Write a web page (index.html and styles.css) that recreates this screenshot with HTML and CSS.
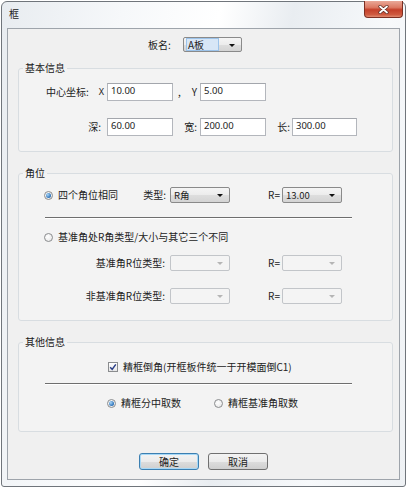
FILE: index.html
```html
<!DOCTYPE html>
<html>
<head>
<meta charset="utf-8">
<link rel="stylesheet" href="styles.css">
</head>
<body>
<div class="window">
  <div class="titlebar">
    <span class="title">框</span>
    <div class="close">
      <svg width="11" height="9" viewBox="0 0 11 9"><path d="M2 1.5 L9 7.5 M9 1.5 L2 7.5" stroke="#5a2a22" stroke-width="3.2" stroke-linecap="round"/><path d="M2 1.5 L9 7.5 M9 1.5 L2 7.5" stroke="#fff" stroke-width="1.8" stroke-linecap="round"/></svg>
    </div>
  </div>
  <div class="client">
    <div class="board-row">
      <span class="board-label">板名:</span>
      <div class="combo combo-board"><span class="hl">A板</span><i class="arrow"></i></div>
    </div>

    <fieldset class="group g-basic">
      <legend>基本信息</legend>
      <div class="grid-basic">
        <div class="cell-r">中心坐标:<span class="axis">X</span></div>
        <div class="input">10.00</div>
        <div class="cell-sb"><span>,</span><span>Y</span></div>
        <div class="input">5.00</div>
        <div></div>
        <div></div>
        <div class="cell-r pr6">深:</div>
        <div class="input">60.00</div>
        <div class="cell-r">宽:</div>
        <div class="input">200.00</div>
        <div class="cell-r pr2">长:</div>
        <div class="input">300.00</div>
      </div>
    </fieldset>

    <fieldset class="group g-corner">
      <legend>角位</legend>
      <div class="grid-corner first">
        <div class="cell-sb radio-lead">
          <span class="opt"><i class="radio checked"></i>四个角位相同</span>
          <span>类型:</span>
        </div>
        <div class="combo"><span class="val">R角</span><i class="arrow"></i></div>
        <div class="cell-r pr2">R=</div>
        <div class="combo"><span class="val">13.00</span><i class="arrow"></i></div>
      </div>
      <div class="sep"></div>
      <div class="opt-row radio-lead"><span class="opt"><i class="radio"></i>基准角处R角类型/大小与其它三个不同</span></div>
      <div class="grid-corner row3">
        <div class="cell-r pr5">基准角R位类型:</div>
        <div class="combo disabled"><i class="arrow"></i></div>
        <div class="cell-r pr2">R=</div>
        <div class="combo disabled"><i class="arrow"></i></div>
      </div>
      <div class="grid-corner row4">
        <div class="cell-r pr5">非基准角R位类型:</div>
        <div class="combo disabled"><i class="arrow"></i></div>
        <div class="cell-r pr2">R=</div>
        <div class="combo disabled"><i class="arrow"></i></div>
      </div>
    </fieldset>

    <fieldset class="group g-other">
      <legend>其他信息</legend>
      <div class="opt-row check-row">
        <span class="opt"><i class="checkbox"><svg width="8" height="8" viewBox="0 0 8 8"><path d="M1.2 4.2 L3.2 6.4 L6.8 1.4" fill="none" stroke="#2b3f87" stroke-width="1.5"/></svg></i>精框倒角(开框板件统一于开模面倒C1)</span>
      </div>
      <div class="sep sep2"></div>
      <div class="opt-row radios-row">
        <span class="opt first-opt"><i class="radio checked"></i>精框分中取数</span>
        <span class="opt"><i class="radio"></i>精框基准角取数</span>
      </div>
    </fieldset>

    <div class="buttons">
      <div class="btn focus">确定</div>
      <div class="btn">取消</div>
    </div>
  </div>
</div>
</body>
</html>
```

FILE: styles.css
```css
* { box-sizing: border-box; }
html, body { margin: 0; padding: 0; background: #ffffff; }
body {
  padding: 1px;
  font-family: "Noto Sans CJK SC", "Noto Sans", sans-serif;
  font-size: 10px;
  line-height: 14px;
  color: #222222;
}

.window {
  width: 405px;
  height: 486px;
  border: 1px solid #70757b;
  border-radius: 6px 6px 3px 3px;
  background: linear-gradient(100deg, #e8ecf0 0%, #f6f8fa 25%, #ffffff 45%, #e9edf1 60%, #f7f9fb 80%, #eef1f4 100%);
  display: flex;
  flex-direction: column;
}

.titlebar {
  height: 26px;
  display: flex;
  justify-content: space-between;
  align-items: flex-start;
  padding-left: 7px;
}
.title {
  margin-top: 6px;
  font-size: 10px;
  line-height: 12px;
  color: #1a1a1a;
}
.close {
  width: 39px;
  height: 17px;
  margin-top: -1px;
  margin-right: 2px;
  border: 1px solid #7d2f22;
  border-top: none;
  border-radius: 0 0 4px 4px;
  background: linear-gradient(#e9a898 0%, #dc7a64 40%, #c4402a 55%, #cf5a40 85%, #e08a70 100%);
  display: flex;
  align-items: center;
  justify-content: center;
}

.client {
  margin: 0 5px 6px;
  height: 452px;
  border: 1px solid #9ea4ab;
  background: #f0f0f0;
  padding-top: 8px;
}

.board-row {
  display: flex;
  align-items: center;
  height: 15px;
  padding-left: 140px;
}
.board-label { width: 35px; }

.combo {
  position: relative;
  height: 16px;
  border: 1px solid #8a8a8a;
  border-radius: 2px;
  background: linear-gradient(#f5f5f5 0%, #ececec 50%, #dedede 51%, #d4d4d4 100%);
  display: flex;
  align-items: center;
  padding-left: 3px;
  font-size: 9.5px;
}
.combo-board { width: 59px; height: 15px; padding-left: 2px; }
.combo .hl {
  background: #d7e6f6;
  border: 1px solid #9cc3ea;
  padding: 0 1px;
  line-height: 11px;
  width: 33px;
  font-size: 10px;
}
.combo .val { line-height: 14px; }
.arrow {
  position: absolute;
  right: 6px;
  top: 6px;
  width: 0;
  height: 0;
  border-left: 3px solid transparent;
  border-right: 3px solid transparent;
  border-top: 3px solid #111;
}
.combo.disabled {
  background: #f4f4f4;
  border-color: #c2c5c9;
}
.combo.disabled .arrow { border-top-color: #b5b5b5; }

.group {
  margin: 9px 6px 0 10px;
  padding: 0;
  border: 1px solid #d8dde1;
  border-radius: 3px;
  background: #f3f3f3;
  min-width: 0;
}
.group legend {
  margin-left: 4px;
  padding: 0 2px;
  line-height: 14px;
  font-size: 10px;
  color: #1a1a1a;
}
.g-corner, .g-other { margin-top: 14px; }

.grid-basic {
  display: grid;
  grid-template-columns: 88px 66px 27px 66px 26px 65px;
  grid-auto-rows: 18px;
  row-gap: 17px;
  padding: 8px 0 15px;
}
.cell-r {
  display: flex;
  align-items: center;
  justify-content: flex-end;
  padding-right: 3px;
  white-space: nowrap;
}
.cell-sb {
  display: flex;
  align-items: center;
  justify-content: space-between;
  padding: 0 3px 0 5px;
}
.pr6 { padding-right: 6px; }
.pr5 { padding-right: 5px; }
.pr2 { padding-right: 2px; }
.axis {
  margin-left: 10px;
  font-size: 9px;
  font-family: "Noto Sans", sans-serif;
}

.input {
  background: #ffffff;
  border: 1px solid #b3b6bc;
  border-top-color: #a3a6ac;
  padding-left: 3px;
  font-family: "Noto Sans", sans-serif;
  font-size: 9.5px;
  line-height: 14px;
}

.grid-corner {
  display: grid;
  grid-template-columns: 151px 60px 52px 60px;
  grid-auto-rows: 16px;
}
.grid-corner.first { margin-top: 7px; }
.grid-corner.row3 { margin-top: 11px; }
.grid-corner.row4 { margin-top: 17px; margin-bottom: 16px; }
.radio-lead { padding-left: 25px; padding-right: 4px; }

.sep {
  margin: 14px 0 0 26px;
  width: 307px;
  height: 2px;
  border-top: 1px solid #6e6e6e;
  border-bottom: 1px solid #ffffff;
}
.sep2 { margin-top: 9px; }

.opt-row {
  display: flex;
  align-items: center;
  height: 14px;
  margin-top: 11px;
}
.opt {
  display: flex;
  align-items: center;
  white-space: nowrap;
}
.radio {
  width: 9px;
  height: 9px;
  border-radius: 50%;
  border: 1px solid #8a8c8e;
  background: radial-gradient(circle at 40% 40%, #ffffff 0%, #e3e3e3 100%);
  margin-right: 5px;
  display: flex;
  align-items: center;
  justify-content: center;
}
.radio.checked::after {
  content: "";
  width: 5px;
  height: 5px;
  border-radius: 50%;
  background: radial-gradient(circle at 35% 35%, #a9d6f7 0%, #2a70b8 70%, #1d5390 100%);
}
.checkbox {
  width: 10px;
  height: 10px;
  border: 1px solid #8a8c8e;
  background: linear-gradient(#ffffff, #e6e6e6);
  margin-right: 5px;
  display: flex;
  align-items: center;
  justify-content: center;
}

.check-row { padding-left: 89px; }
.radios-row { padding-left: 88px; margin-bottom: 21px; }
.first-opt { width: 107px; }

.buttons {
  display: flex;
  justify-content: center;
  gap: 9px;
  margin-top: 21px;
}
.btn {
  width: 60px;
  height: 17px;
  border: 1px solid #707070;
  border-radius: 3px;
  background: linear-gradient(#f3f3f3 0%, #ebebeb 50%, #dddddd 51%, #cfcfcf 100%);
  display: flex;
  align-items: center;
  justify-content: center;
  font-size: 10px;
}
.btn.focus {
  border-color: #3c7fb1;
  box-shadow: inset 0 0 0 1px #a6d8f7;
}
```
